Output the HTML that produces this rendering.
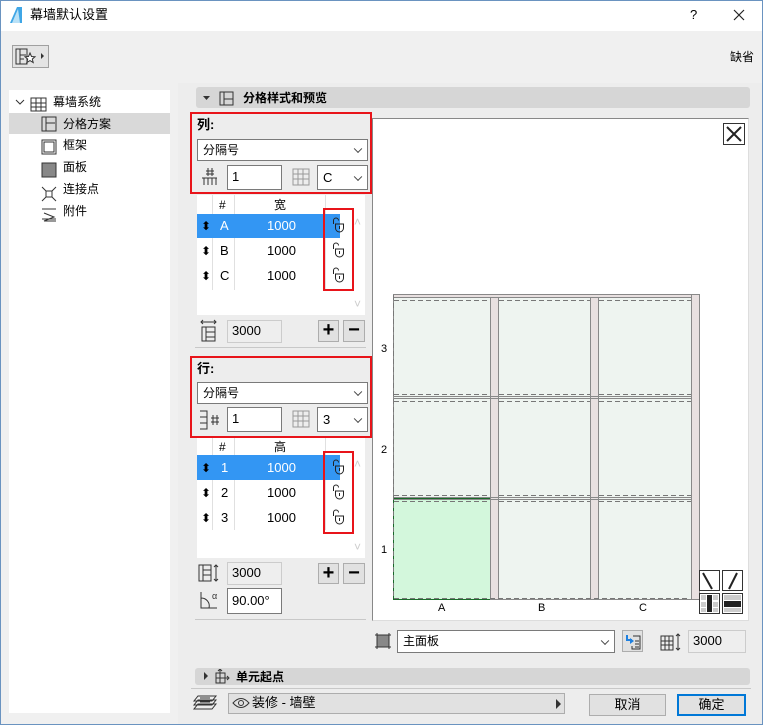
<!DOCTYPE html>
<html><head><meta charset="utf-8"><style>
*{box-sizing:border-box;margin:0;padding:0}
body{width:763px;height:725px;background:#f0f0f0;font-family:"Liberation Sans","Noto Sans CJK SC",sans-serif;font-size:12px;color:#000;position:relative;overflow:hidden}
.a{position:absolute}
.t{position:absolute;white-space:nowrap;line-height:14px}
.inp{position:absolute;background:#fff;border:1px solid #7a7a7a;padding-left:4px;line-height:22px;font-size:13px}
.sel{position:absolute;background:#fff;border:1px solid #7a7a7a;padding-left:5px;font-size:12px}
.chev{position:absolute;right:6px;top:50%;width:6px;height:6px;border-right:1px solid #444;border-bottom:1px solid #444;transform:translateY(-70%) rotate(45deg)}
.red{position:absolute;border:2px solid #e8141a}
.btn{position:absolute;background:#e1e1e1;border:1px solid #adadad;text-align:center}
</style></head><body>
<div class="a" style="left:0;top:0;width:763px;height:725px;border:1px solid #6a93c0"></div>
<div class="a" style="left:1px;top:1px;width:761px;height:30px;background:#fff"></div>
<svg class="a" style="left:9px;top:6px" width="14" height="18"><path d="M1 17 L8 1 L13 1 L13 17 Z" fill="#3fa6e6"/><path d="M3 17 L9 3 L11 17Z" fill="#b9e1f7"/></svg>
<div class="t" style="left:30px;top:8px;font-size:13px">幕墙默认设置</div>
<div class="t" style="left:690px;top:8px;font-size:13px">?</div>
<svg class="a" style="left:733px;top:9px" width="12" height="12"><path d="M1 1l10 10M11 1L1 11" stroke="#222" stroke-width="1.2"/></svg>
<!-- favorites btn -->
<div class="a" style="left:12px;top:45px;width:37px;height:23px;border:1px solid #a0a0a0;background:#e4e4e4"></div>
<svg class="a" style="left:15px;top:47px" width="32" height="20"><path d="M1 2h11v15H1zM5 2v15M5 8h6M5 12h4" fill="none" stroke="#333"/><path d="M15 6l1.5 3.5 3.5.3-2.7 2.3.9 3.5-3.2-2-3.2 2 .9-3.5L10 9.8l3.5-.3z" fill="#fff" stroke="#333"/><path d="M26 6l3 3-3 3z" fill="#333"/></svg>
<div class="t" style="left:730px;top:50px">缺省</div>
<!-- tree -->
<div class="a" style="left:9px;top:90px;width:161px;height:623px;background:#fff"></div>
<div class="a" style="left:9px;top:113px;width:161px;height:21px;background:#d9d9d9"></div>
<svg class="a" style="left:14px;top:95px" width="150" height="130" fill="none" stroke="#333">
<path d="M2 5l4 4 4-4"/>
<path d="M17 3h15v13H17zM22 3v13M27 3v13M17 8h15M17 12h15"/>
<path d="M28 22h14v14H28zM32 22v14M32 28h9"/>
<path d="M28 45h14v14H28zM30 47h10v10H30z"/>
<rect x="28" y="68" width="14" height="14" fill="#888"/>
<path d="M28 92l14 14M42 92L28 106"/><rect x="32" y="96" width="6" height="6" fill="#fff"/>
<path d="M28 114h14M30 118l10 4-10 4h12M28 124h14"/>
</svg>
<div class="t" style="left:53px;top:95px">幕墙系统</div>
<div class="t" style="left:63px;top:117px">分格方案</div>
<div class="t" style="left:63px;top:138px">框架</div>
<div class="t" style="left:63px;top:160px">面板</div>
<div class="t" style="left:63px;top:182px">连接点</div>
<div class="t" style="left:63px;top:204px">附件</div>
<!-- right pane -->
<div class="a" style="left:178px;top:83px;width:584px;height:641px;background:#ededed"></div>
<div class="a" style="left:196px;top:87px;width:554px;height:21px;background:#d6d6d6;border-radius:3px"></div>
<svg class="a" style="left:201px;top:91px" width="40" height="16"><path d="M2 5h7l-3.5 4z" fill="#333"/><path d="M19 1h13v13H19zM23 1v13M23 8h9" fill="none" stroke="#333"/></svg>
<div class="t" style="left:243px;top:91px;font-weight:bold">分格样式和预览</div>
<!-- Column section -->
<div class="t" style="left:197px;top:118px;font-weight:bold;font-size:13px">列:</div>
<div class="sel" style="left:197px;top:139px;width:171px;height:22px;line-height:20px">分隔号<div class="chev"></div></div>
<svg class="a" style="left:199px;top:166px" width="20" height="20" fill="none" stroke="#333"><path d="M3 12h15M5 12v7M9 12v7M13 12v7M17 12v7M9 2v8M13 2v8M7 5h8M7 8h8"/></svg>
<div class="inp" style="left:227px;top:165px;width:55px;height:25px">1</div>
<svg class="a" style="left:292px;top:168px" width="18" height="18" fill="none" stroke="#999"><path d="M1 1h16v16H1zM6 1v16M11 1v16M1 6h16M1 11h16"/></svg>
<div class="sel" style="left:317px;top:165px;width:51px;height:25px;line-height:23px;font-size:13px">C<div class="chev"></div></div>
<div class="red" style="left:190px;top:112px;width:182px;height:82px"></div>
<!-- table 1 -->
<div class="a" style="left:197px;top:195px;width:168px;height:120px;background:#fff"></div>
<div class="a" style="left:212px;top:195px;width:1px;height:95px;background:#e0e0e0"></div>
<div class="a" style="left:234px;top:195px;width:1px;height:95px;background:#e0e0e0"></div>
<div class="a" style="left:325px;top:195px;width:1px;height:95px;background:#e0e0e0"></div>
<div class="a" style="left:197px;top:214px;width:143px;height:24px;background:#3396f3"></div>
<div class="t" style="left:219px;top:198px">#</div>
<div class="t" style="left:274px;top:198px">宽</div>
<div class="t" style="left:201px;top:219px;color:#000">⬍</div>
<div class="t" style="left:220px;top:219px;color:#fff;font-size:13px">A</div>
<div class="t" style="left:267px;top:219px;color:#fff;font-size:13px">1000</div>
<div class="t" style="left:201px;top:244px">⬍</div>
<div class="t" style="left:220px;top:244px;font-size:13px">B</div>
<div class="t" style="left:267px;top:244px;font-size:13px">1000</div>
<div class="t" style="left:201px;top:269px">⬍</div>
<div class="t" style="left:220px;top:269px;font-size:13px">C</div>
<div class="t" style="left:267px;top:269px;font-size:13px">1000</div>
<svg class="a" style="left:331px;top:217px" width="20" height="70" fill="none" stroke="#222"><g id="lk"><path d="M2.5 7V3.5a2.5 2.5 0 0 1 5 0"/><path d="M4.5 7h8v4a4 4 0 0 1-8 0z"/><path d="M8.5 9v3"/></g><use href="#lk" y="25"/><use href="#lk" y="50"/></svg>
<div class="red" style="left:323px;top:208px;width:31px;height:83px"></div>
<div class="t" style="left:354px;top:215px;color:#ccc">˄</div>
<div class="t" style="left:354px;top:297px;color:#ccc">˅</div>
<svg class="a" style="left:199px;top:318px" width="20" height="26" fill="none" stroke="#333"><path d="M2 4h15M4 2l-2 2 2 2M15 2l2 2-2 2M3 9h13v14H3zM7 9v14M7 14h9M7 19h9"/></svg>
<div class="inp" style="left:227px;top:320px;width:55px;height:23px;background:#eee;border-color:#ccc;line-height:20px">3000</div>
<div class="btn" style="left:318px;top:320px;width:21px;height:22px;font-size:20px;line-height:19px;font-weight:bold">+</div>
<div class="btn" style="left:343px;top:320px;width:22px;height:22px;font-size:20px;line-height:19px;font-weight:bold">−</div>
<div class="a" style="left:195px;top:347px;width:171px;height:1px;background:#c8c8c8"></div>
<!-- Row section -->
<div class="t" style="left:197px;top:362px;font-weight:bold;font-size:13px">行:</div>
<div class="sel" style="left:197px;top:382px;width:171px;height:22px;line-height:20px">分隔号<div class="chev"></div></div>
<svg class="a" style="left:198px;top:409px" width="24" height="22" fill="none" stroke="#333"><path d="M2 2h7v18H2M9 2v18M2 8h7M2 14h7M13 9h8M13 13h8M15 6v10M19 6v10"/></svg>
<div class="inp" style="left:227px;top:407px;width:55px;height:25px">1</div>
<svg class="a" style="left:292px;top:410px" width="18" height="18" fill="none" stroke="#999"><path d="M1 1h16v16H1zM6 1v16M11 1v16M1 6h16M1 11h16"/></svg>
<div class="sel" style="left:317px;top:407px;width:51px;height:25px;line-height:23px;font-size:13px">3<div class="chev"></div></div>
<div class="red" style="left:190px;top:356px;width:182px;height:82px"></div>
<!-- table 2 -->
<div class="a" style="left:197px;top:438px;width:168px;height:120px;background:#fff"></div>
<div class="a" style="left:212px;top:438px;width:1px;height:92px;background:#e0e0e0"></div>
<div class="a" style="left:234px;top:438px;width:1px;height:92px;background:#e0e0e0"></div>
<div class="a" style="left:325px;top:438px;width:1px;height:92px;background:#e0e0e0"></div>
<div class="a" style="left:197px;top:455px;width:143px;height:25px;background:#3396f3"></div>
<div class="t" style="left:219px;top:440px">#</div>
<div class="t" style="left:274px;top:440px">高</div>
<div class="t" style="left:201px;top:461px">⬍</div>
<div class="t" style="left:221px;top:461px;color:#fff;font-size:13px">1</div>
<div class="t" style="left:267px;top:461px;color:#fff;font-size:13px">1000</div>
<div class="t" style="left:201px;top:486px">⬍</div>
<div class="t" style="left:221px;top:486px;font-size:13px">2</div>
<div class="t" style="left:267px;top:486px;font-size:13px">1000</div>
<div class="t" style="left:201px;top:511px">⬍</div>
<div class="t" style="left:221px;top:511px;font-size:13px">3</div>
<div class="t" style="left:267px;top:511px;font-size:13px">1000</div>
<svg class="a" style="left:331px;top:459px" width="20" height="70" fill="none" stroke="#222"><use href="#lk"/><use href="#lk" y="25"/><use href="#lk" y="50"/></svg>
<div class="red" style="left:323px;top:451px;width:31px;height:83px"></div>
<div class="t" style="left:354px;top:457px;color:#ccc">˄</div>
<div class="t" style="left:354px;top:540px;color:#ccc">˅</div>
<svg class="a" style="left:197px;top:563px" width="24" height="20" fill="none" stroke="#333"><path d="M2 2h12v16H2zM6 2v16M6 7h8M6 12h8M19 2v16M17 4l2-2 2 2M17 16l2 2 2-2"/></svg>
<div class="inp" style="left:227px;top:562px;width:55px;height:23px;background:#eee;border-color:#ccc;line-height:20px">3000</div>
<div class="btn" style="left:318px;top:563px;width:21px;height:21px;font-size:20px;line-height:18px;font-weight:bold">+</div>
<div class="btn" style="left:343px;top:563px;width:22px;height:21px;font-size:20px;line-height:18px;font-weight:bold">−</div>
<svg class="a" style="left:197px;top:590px" width="26" height="22" fill="none" stroke="#333"><path d="M4 2v16h16M4 8a8 8 0 0 1 8 10"/><text x="15" y="9" font-size="9" fill="#333" stroke="none">α</text></svg>
<div class="inp" style="left:227px;top:588px;width:55px;height:26px;line-height:23px">90.00°</div>
<div class="a" style="left:195px;top:619px;width:171px;height:1px;background:#c8c8c8"></div>
<!-- preview -->
<div class="a" style="left:372px;top:118px;width:377px;height:503px;background:#fff;border:1px solid #888;border-right-color:#ddd;border-bottom-color:#ddd"></div>
<div class="a" style="left:723px;top:123px;width:22px;height:22px;border:1px solid #333;background:#fff"></div>
<svg class="a" style="left:723px;top:123px" width="22" height="22"><path d="M4 4l14 14M18 4L4 18" stroke="#222" stroke-width="2"/></svg>
<svg class="a" style="left:372px;top:280px" width="340" height="340">
<g stroke="#888" stroke-width="1">
<rect x="21.5" y="14.5" width="306" height="305" fill="#eef4f0"/>
<rect x="21.5" y="218.5" width="97" height="101" fill="#d3f7dc" stroke="#1a6a2a"/>
<rect x="118.5" y="14.5" width="8" height="305" fill="#e8e0e0"/>
<rect x="218.5" y="14.5" width="8" height="305" fill="#e8e0e0"/>
<rect x="319.5" y="14.5" width="8" height="305" fill="#e8e0e0"/>
<rect x="21.5" y="14.5" width="298" height="3" fill="#e8e0e0"/>
<path d="M21 116.5h299M21 118.5h299M21 217.5h299M21 219.5h299" />
</g>
<g stroke="#777" stroke-dasharray="5 3" fill="none">
<path d="M22 20.5h96M127 20.5h91M227 20.5h92M22 114.5h96M127 114.5h91M227 114.5h92M22 121.5h96M127 121.5h91M227 121.5h92M22 215.5h96M127 215.5h91M227 215.5h92M22 221.5h96M127 221.5h91M227 221.5h92M22 318.5h296M21.5 15v304"/>
</g>
<text x="9" y="72" font-size="11" font-family="Liberation Sans">3</text>
<text x="9" y="173" font-size="11" font-family="Liberation Sans">2</text>
<text x="9" y="273" font-size="11" font-family="Liberation Sans">1</text>
<text x="66" y="331" font-size="11" font-family="Liberation Sans">A</text>
<text x="166" y="331" font-size="11" font-family="Liberation Sans">B</text>
<text x="267" y="331" font-size="11" font-family="Liberation Sans">C</text>
</svg>
<svg class="a" style="left:699px;top:570px" width="48" height="46">
<g fill="#fff" stroke="#333"><rect x="0.5" y="0.5" width="20" height="20"/><rect x="23.5" y="0.5" width="20" height="20"/><rect x="0.5" y="23.5" width="20" height="20"/><rect x="23.5" y="23.5" width="20" height="20"/></g>
<path d="M4 3l9 16M38 3l-8 16" stroke="#222" stroke-width="2"/>
<g fill="#ccc"><rect x="2" y="25" width="5" height="5"/><rect x="14" y="25" width="5" height="5"/><rect x="2" y="32" width="5" height="5"/><rect x="14" y="32" width="5" height="5"/><rect x="2" y="38" width="5" height="4"/><rect x="14" y="38" width="5" height="4"/><rect x="25" y="25" width="17" height="5"/><rect x="25" y="38" width="17" height="4"/></g>
<g fill="#222"><rect x="8" y="25" width="5" height="17"/><rect x="25" y="31" width="17" height="6"/></g>
</svg>
<!-- bottom row -->
<svg class="a" style="left:375px;top:633px" width="16" height="16" fill="none" stroke="#333"><rect x="2" y="2" width="12" height="12" fill="#888"/><path d="M0 2h16M0 14h16M2 0v16M14 0v16"/></svg>
<div class="sel" style="left:397px;top:630px;width:218px;height:23px;line-height:21px">主面板<div class="chev"></div></div>
<div class="btn" style="left:622px;top:630px;width:21px;height:22px"></div>
<svg class="a" style="left:624px;top:632px" width="18" height="18"><path d="M3 3v5h5" fill="none" stroke="#1e80e0" stroke-width="2"/><path d="M6 6l4 3-4 3z" fill="#1e80e0"/><path d="M9 4h7v13H8v-3M11 9h4M11 12h4M11 15h4" fill="none" stroke="#333"/></svg>
<svg class="a" style="left:660px;top:632px" width="22" height="20" fill="none" stroke="#333"><path d="M1 4h12v14H1zM5 4v14M9 4v14M1 9h12M1 13h12M18 2v16M16 4l2-2 2 2M16 16l2 2 2-2"/></svg>
<div class="inp" style="left:688px;top:630px;width:58px;height:23px;background:#eee;border-color:#ccc;line-height:20px">3000</div>
<!-- section 2 -->
<div class="a" style="left:195px;top:668px;width:555px;height:17px;background:#d6d6d6;border-radius:3px"></div>
<svg class="a" style="left:201px;top:669px" width="40" height="16"><path d="M3 3l4 4-4 4z" fill="#333"/><path d="M15 4h9v10h-9zM19 4v10M15 9h9M19 0v4M17 2l2-2 2 2M24 9h3M26 7l2 2-2 2" fill="none" stroke="#333"/></svg>
<div class="t" style="left:236px;top:670px;font-weight:bold">单元起点</div>
<div class="a" style="left:191px;top:688px;width:560px;height:1px;background:#c8c8c8"></div>
<!-- bottom bar -->
<svg class="a" style="left:192px;top:694px" width="26" height="20" fill="none" stroke="#333"><path d="M6 2h18l-4 5H2zM6 6h18l-4 5H2zM6 10h18l-4 5H2zM8 4h10M8 8h10"/></svg>
<div class="a" style="left:228px;top:693px;width:337px;height:21px;background:#e1e1e1;border:1px solid #adadad"></div>
<svg class="a" style="left:232px;top:697px" width="18" height="12" fill="none" stroke="#333"><path d="M1 6q8-9 16 0q-8 9-16 0z"/><circle cx="9" cy="6" r="2.5"/></svg>
<div class="t" style="left:252px;top:696px;font-size:13px">装修 - 墙壁</div>
<svg class="a" style="left:556px;top:699px" width="6" height="10"><path d="M0 0l5 5-5 5z" fill="#333"/></svg>
<div class="btn" style="left:589px;top:694px;width:77px;height:22px;line-height:20px;font-size:13px">取消</div>
<div class="btn" style="left:677px;top:694px;width:69px;height:22px;line-height:18px;font-size:13px;border:2px solid #0078d7">确定</div>
</body></html>
